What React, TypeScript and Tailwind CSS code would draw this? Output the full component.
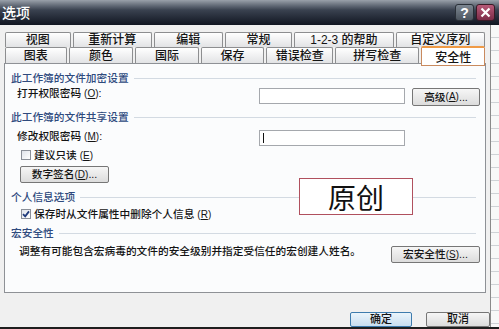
import type { ReactNode } from 'react';

const font = "font-['Liberation_Sans','Noto_Sans_CJK_SC',sans-serif]";

function Tab({ label, className, active }: { label: ReactNode; className: string; active?: boolean }) {
  if (active) {
    return (
      <div
        className={`relative z-10 -mt-[1px] h-[20px] flex items-start justify-center pt-[1px] bg-white border border-[#c98a5e] border-t-2 border-t-[#ef9a45] rounded-t-[2px] text-[12px] text-[#141414] ${className}`}
      >
        {label}
      </div>
    );
  }
  return (
    <div
      className={`h-full flex items-center justify-center border border-b-0 border-[#8d8e90] rounded-t-[2px] bg-linear-to-b from-white to-[#e2e3e5] text-[12px] text-[#141414] ${className}`}
    >
      {label}
    </div>
  );
}

function GroupHeader({ children, className }: { children: ReactNode; className: string }) {
  return (
    <div className={`flex items-center h-[14px] pr-[4px] ${className}`}>
      <span className="text-[#2e4a7d] leading-[14px]">{children}</span>
      <div className="flex-1 ml-[5px] h-px bg-[#d3dae2]" />
    </div>
  );
}

function Btn({ children, className }: { children: ReactNode; className: string }) {
  return (
    <div
      className={`flex items-center justify-center border border-[#767676] rounded-[2px] bg-linear-to-b from-[#f6f6f6] to-[#dcdcdc] text-[#141414] leading-none ${className}`}
    >
      {children}
    </div>
  );
}

function Key({ k }: { k: string }) {
  return (
    <span className="text-[10px]">
      (<span className="underline">{k}</span>)
    </span>
  );
}

function CheckBox({ checked }: { checked?: boolean }) {
  return (
    <div className="w-[10px] h-[10px] border border-[#8a8f98] bg-linear-to-br from-[#dfe3ea] to-white flex items-center justify-center">
      {checked && (
        <svg width="8" height="8" viewBox="0 0 8 8">
          <path d="M1 4.2 L3.2 6.4 L7 1.4" fill="none" stroke="#1f3a7c" strokeWidth="1.8" />
        </svg>
      )}
    </div>
  );
}

export default function App() {
  return (
    <div className={`w-[499px] h-[329px] overflow-hidden flex flex-col bg-[#f0f0f0] text-[10.7px] font-medium ${font}`}>
      {/* Title bar */}
      <div className="h-[25px] shrink-0 flex items-center bg-linear-to-b from-[#9aa1aa] via-[#3a4250] via-40% to-[#121722]">
        <span className="ml-[2px] text-[14px] text-white leading-none">选项</span>
        <div className="ml-auto flex gap-[2px] mr-[4px]">
          <div className="w-[19px] h-[17px] rounded-[3px] border border-[#2a3038] bg-linear-to-b from-[#7d8792] to-[#4c555f] flex items-center justify-center text-white text-[14px] font-bold leading-none">
            ?
          </div>
          <div className="w-[19px] h-[17px] rounded-[3px] border border-[#3a1a26] bg-linear-to-b from-[#b85a78] to-[#7c2c48] flex items-center justify-center">
            <svg width="11" height="11" viewBox="0 0 11 11">
              <path d="M1.5 1.5 L9.5 9.5 M9.5 1.5 L1.5 9.5" stroke="white" strokeWidth="2.2" />
            </svg>
          </div>
        </div>
      </div>

      <div className="flex flex-1 min-h-0">
        <div className="w-[490px] flex flex-col">
          {/* Tabs */}
          <div className="pt-[7px] px-[5px] flex flex-col">
            <div className="h-[15px] flex gap-[2px]">
              <Tab label="视图" className="w-[66px]" />
              <Tab label="重新计算" className="w-[80px]" />
              <Tab label="编辑" className="w-[69px]" />
              <Tab label="常规" className="w-[68px]" />
              <Tab label="1-2-3 的帮助" className="w-[100px]" />
              <Tab label="自定义序列" className="w-[90px]" />
            </div>
            <div className="h-[16px] flex items-start gap-[2px]">
              <Tab label="图表" className="w-[62px]" />
              <Tab label="颜色" className="w-[65px]" />
              <Tab label="国际" className="w-[64px]" />
              <Tab label="保存" className="w-[64px]" />
              <Tab label="错误检查" className="w-[67px]" />
              <Tab label="拼写检查" className="w-[85px]" />
              <Tab label="安全性" className="w-[64px]" active />
            </div>
          </div>

          {/* Panel */}
          <div className="relative z-0 mx-[4px] h-[230px] border border-[#8e9196] bg-[#fbfcfd] pl-[6px] pr-[5px] flex flex-col text-[#141414]">
            <GroupHeader className="mt-[7px]">此工作簿的文件加密设置</GroupHeader>
            <div className="mt-[2px] h-[20px] flex items-start">
              <span className="ml-[6px] w-[242px] leading-[12px]">
                打开权限密码 <Key k="O" />:
              </span>
              <div className="mt-[1px] w-[146px] h-[16px] border border-[#a5a8ad] bg-white" />
              <Btn className="ml-auto mt-[1px] w-[68px] h-[18px]">
                高级 <Key k="A" />...
              </Btn>
            </div>

            <GroupHeader className="mt-[3px]">此工作簿的文件共享设置</GroupHeader>
            <div className="mt-[6px] h-[16px] flex items-start">
              <span className="ml-[6px] w-[242px] leading-[12px]">
                修改权限密码 <Key k="M" />:
              </span>
              <div className="w-[146px] h-[16px] border border-[#a5a8ad] bg-white flex items-center pl-[3px]">
                <div className="w-px h-[10px] bg-[#111]" />
              </div>
            </div>
            <div className="mt-[2px] h-[14px] flex items-center ml-[10px] gap-[3px]">
              <CheckBox />
              <span>
                建议只读 <Key k="E" />
              </span>
            </div>
            <Btn className="mt-[4px] ml-[9px] w-[89px] h-[17px]">
              数字签名 <Key k="D" />...
            </Btn>

            <GroupHeader className="mt-[7px]">个人信息选项</GroupHeader>
            <div className="mt-[3px] h-[14px] flex items-center ml-[10px] gap-[3px]">
              <CheckBox checked />
              <span>
                保存时从文件属性中删除个人信息 <Key k="R" />
              </span>
            </div>

            <GroupHeader className="mt-[5px]">宏安全性</GroupHeader>
            <div className="mt-[5px] h-[19px] flex items-start">
              <span className="ml-[8px] leading-[12px]">调整有可能包含宏病毒的文件的安全级别并指定受信任的宏创建人姓名。</span>
              <Btn className="ml-auto mt-[1px] w-[89px] h-[17px]">
                宏安全性 <Key k="S" />...
              </Btn>
            </div>

            {/* stamp overlay */}
            <div className="absolute left-[294px] top-[114px] w-[114px] h-[37px] border border-[#b0505e] bg-white flex items-center justify-center text-[28px] font-normal leading-none text-[#111] font-['Noto_Sans_CJK_SC',sans-serif]">
              原创
            </div>
          </div>

          {/* Footer */}
          <div className="flex-1 flex items-start justify-end pt-[19px] gap-[14px]">
            <div className="w-[62px] h-[15px] rounded-[2px] border border-[#3d7bad] bg-linear-to-b from-[#eaf4fb] to-[#c9def0] flex items-center justify-center text-[11px] text-[#141414] leading-none">
              确定
            </div>
            <Btn className="w-[64px] h-[15px] text-[11px]">取消</Btn>
          </div>
        </div>
        <div className="w-px bg-[#8a8a8a]" />
        <div className="flex-1 bg-[repeating-linear-gradient(to_bottom,#f8f8f8_0px,#f8f8f8_12px,#cfd2d6_12px,#cfd2d6_13px)]" />
      </div>
      <div className="h-[2px] shrink-0 bg-[#1e1e1e]" />
    </div>
  );
}
